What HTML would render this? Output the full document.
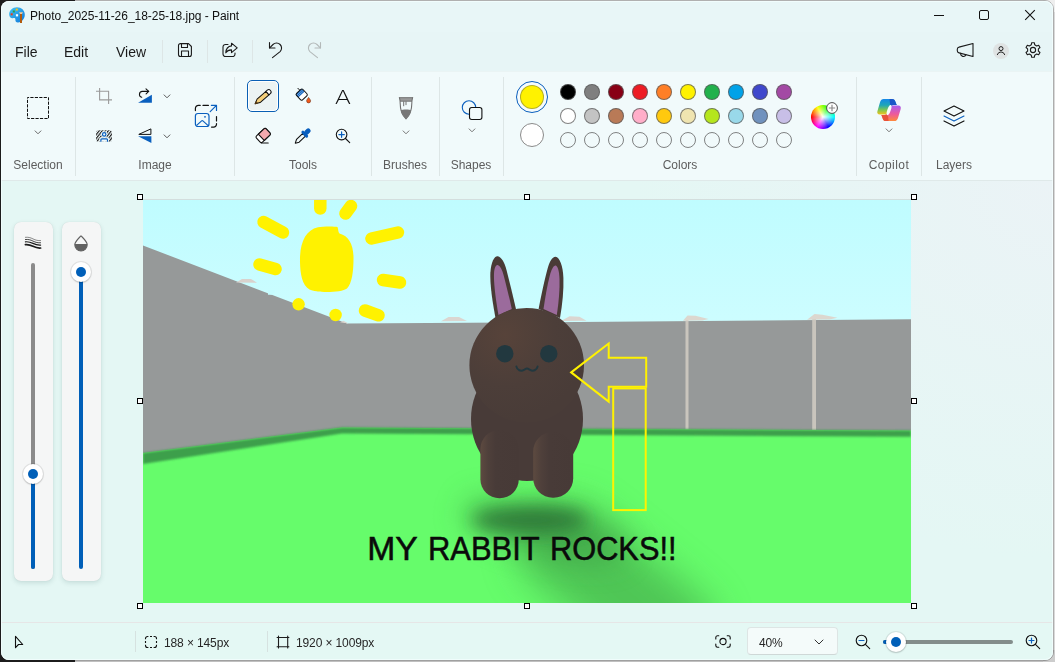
<!DOCTYPE html>
<html lang="en">
<head>
<meta charset="utf-8">
<title>Photo_2025-11-26_18-25-18.jpg - Paint</title>
<style>
*{box-sizing:border-box;margin:0;padding:0}
html,body{width:1055px;height:662px;overflow:hidden}
body{position:relative;font-family:"Liberation Sans",sans-serif;color:#1a1a1a;
  background:linear-gradient(to right,#1c1c1c 0,#1c1c1c 75px,#a9a9a9 75px,#a9a9a9 1053px,#adadad 1053px,#adadad 1054px,#d9d9d9 1054px);}
.abs{position:absolute}
#desk-right{position:absolute;left:1054px;top:0;width:1px;height:662px;background:#d9d9d9}
#win{position:absolute;left:1px;top:1px;width:1052px;height:659px;border-radius:8px;background:#e7f6f7;overflow:hidden}
#titlebar{position:absolute;left:0;top:0;width:1052px;height:31px;background:#e8f6f7}
#menubar{position:absolute;left:0;top:31px;width:1052px;height:39px;background:#e7f5f6}
#ribbon{position:absolute;left:0;top:70px;width:1052px;height:110px;background:#f1fafb;border-bottom:1px solid #dfe9e9;border-top:1px solid #eaf4f4}
#work{position:absolute;left:0;top:180px;width:1052px;height:442px;background:radial-gradient(ellipse 420px 380px at 100% 0%,#ebf3f6 0,rgba(235,243,246,0) 100%),#e4f7f4}
#status{position:absolute;left:0;top:621px;width:1052px;height:38px;background:#e4f8f4;border-top:1px solid #e6e6e6}
.t{position:absolute;white-space:nowrap;line-height:1;filter:grayscale(1)}
.title{left:30px;top:10px;font-size:12px;color:#111;letter-spacing:-.04px}
.menu{font-size:14px;top:45px;color:#1a1a1a}
.lbl{font-size:12px;color:#5d5d5d;top:159px;text-align:center;transform:translateX(-50%)}
.vsep{position:absolute;width:1px;background:#dde6e6}
svg{position:absolute;overflow:visible}
.sw{position:absolute;width:16px;height:16px;border-radius:50%;border:1px solid rgba(90,90,90,.75)}
.panel{position:absolute;top:222px;width:39px;height:359px;border-radius:7px;background:#f5f6f6;box-shadow:0 2px 5px rgba(0,60,60,.13),0 0 1px rgba(0,0,0,.12)}
.hd{position:absolute;width:6px;height:6px;background:#fff;border:1px solid #000}
.st{font-size:12px;color:#262626;top:637px;letter-spacing:-.12px}
</style>
</head>
<body>
<div id="desk-right"></div>
<div class="abs" style="left:75px;top:660px;width:979px;height:1px;background:#a0a0a0"></div><div class="abs" style="left:75px;top:661px;width:979px;height:1px;background:#c0c0c0"></div><div class="abs" style="left:75px;top:0;width:979px;height:1px;background:#b0b0b0"></div>
<div class="abs" style="left:1043px;top:0;width:12px;height:12px;overflow:hidden;background:#eeeeee"><div style="position:absolute;left:-1043px;top:0;width:1054px;height:661px;border-radius:9px;border:1px solid #adadad"></div></div>
<div class="abs" style="left:1043px;top:650px;width:12px;height:12px;overflow:hidden;background:#cdcdcd"><div style="position:absolute;left:-1043px;top:-650px;width:1054px;height:661px;border-radius:9px;border:1px solid #959595"></div></div>
<div id="win">
<div id="titlebar"></div>
<div id="menubar"></div>
<div id="ribbon"></div>
<div id="work"></div>
<div id="status"></div>
<div style="position:absolute;left:0;top:0;width:1052px;height:659px;border-radius:8px;box-shadow:inset 0 0 0 1px rgba(244,255,255,.75)"></div>
</div>
<!-- overlay layer uses page coordinates -->
<div id="ov" class="abs" style="left:0;top:0;width:1055px;height:662px">
<!--TITLE-->
<svg style="left:8px;top:6px" width="18" height="18" viewBox="0 0 18 18">
<defs><linearGradient id="pg" x1="0" y1="0" x2="1" y2="1"><stop offset="0" stop-color="#3fc4f5"/><stop offset="1" stop-color="#1277d8"/></linearGradient></defs>
<path d="M9 1.3C4.4 1.3 1 4.6 1.2 8.6c.1 2.6 2 4.300 4.200 3.500 1.300-.5 2.200.2 2 1.600-.2 1.700.9 3 2.700 2.800C13.800 16.100 16.800 12.700 16.800 8.700 16.800 4.300 13.400 1.300 9 1.300z" fill="url(#pg)"/>
<rect x="2.700" y="7.300" width="2" height="2" fill="#f03a17"/><rect x="4.800" y="4.500" width="2" height="2" fill="#2ea043"/><rect x="7.800" y="2.600" width="2" height="2" fill="#ffc20a"/><rect x="7.900" y="8.200" width="2.200" height="2.200" fill="#fff"/>
<path d="M11 6.200h4l-1 1.800h-2z" fill="#f3c89a"/><rect x="12" y="8" width="2" height="9" fill="#b15a0d"/>
</svg>
<div class="t title">Photo_2025-11-26_18-25-18.jpg - Paint</div>
<svg style="left:934px;top:10px" width="10" height="11" viewBox="0 0 10 11"><path d="M0 5.500h10" stroke="#111" stroke-width="1"/></svg>
<svg style="left:979px;top:10px" width="10" height="10" viewBox="0 0 10 10"><rect x=".5" y=".5" width="9" height="9" rx="1.500" fill="none" stroke="#111" stroke-width="1"/></svg>
<svg style="left:1025px;top:10px" width="10" height="10" viewBox="0 0 10 10"><path d="M.2 .2l9.600 9.600M9.800 .2L.2 9.800" stroke="#111" stroke-width="1.100"/></svg>
<!--MENU-->
<div class="t menu" style="left:15px">File</div>
<div class="t menu" style="left:64px">Edit</div>
<div class="t menu" style="left:116px">View</div>
<div class="vsep" style="left:162px;top:40px;height:23px"></div>
<div class="vsep" style="left:207px;top:40px;height:23px"></div>
<div class="vsep" style="left:252px;top:40px;height:23px"></div>
<svg style="left:178px;top:43px" width="14" height="14" viewBox="0 0 14 14" fill="none" stroke="#1a1a1a" stroke-width="1.100" stroke-linejoin="round"><path d="M2.500 .600h8l2.900 2.900v8a2 2 0 0 1-2 2h-8.900a2 2 0 0 1-2-2v-8.900a2 2 0 0 1 2-2z"/><path d="M3.500 .600v3.900h6v-3.900M3.500 13.400v-5.400h7v5.400"/></svg>
<svg style="left:222px;top:42px" width="16" height="16" viewBox="0 0 16 16" fill="none" stroke="#1a1a1a" stroke-width="1.100" stroke-linejoin="round" stroke-linecap="round"><path d="M6 2.500H3.500a2.500 2.500 0 0 0-2.500 2.500v7a2.500 2.500 0 0 0 2.500 2.500h7a2.500 2.500 0 0 0 2.500-2.500v-1"/><path d="M9.500 1.200l5.700 4.700-5.700 4.700v-2.700c-2.800 0-4.500.9-5.700 2.900.2-3.700 2.200-6.500 5.700-6.900z"/></svg>
<svg style="left:268px;top:41px" width="16" height="17" viewBox="0 0 16 17" fill="none" stroke="#1a1a1a" stroke-width="1.100" stroke-linecap="round" stroke-linejoin="round"><path d="M1.500 1.500v5.500h5.500"/><path d="M1.700 6.800l3.300-3.300a5 5 0 0 1 7.100 7.100l-7.600 6"/></svg>
<svg style="left:306px;top:41px" width="16" height="17" viewBox="0 0 16 17" fill="none" stroke="#b3b9b9" stroke-width="1.100" stroke-linecap="round" stroke-linejoin="round"><path d="M14.500 1.500v5.500h-5.500"/><path d="M14.300 6.800l-3.300-3.300a5 5 0 0 0-7.100 7.100l7.600 6"/></svg>
<svg style="left:956px;top:42px" width="18" height="16" viewBox="0 0 18 16" fill="none" stroke="#1a1a1a" stroke-width="1.100" stroke-linejoin="round" stroke-linecap="round"><path d="M17 1.500v13l-14-3.600a2.200 2.200 0 0 1-1.700-2.100v-1.600a2.200 2.200 0 0 1 1.700-2.100z"/><path d="M4.700 11.400a2.700 2.700 0 0 0 5.200 1.300"/></svg>
<svg style="left:993px;top:43px" width="16" height="16" viewBox="0 0 16 16"><circle cx="8" cy="8" r="8" fill="#dfe3e3"/><circle cx="8" cy="5.600" r="2" fill="none" stroke="#222" stroke-width="1"/><path d="M4.300 11.600a3.900 3.900 0 0 1 7.400 0" fill="none" stroke="#222" stroke-width="1" stroke-linecap="round"/></svg>
<svg style="left:1025px;top:42px" width="16" height="16" viewBox="0 0 16 16" fill="none" stroke="#1a1a1a" stroke-width="1.100" stroke-linejoin="round"><path d="M6.30 2.77 L6.69 0.72 L9.31 0.72 L9.70 2.77 L11.68 3.91 L13.65 3.22 L14.96 5.49 L13.38 6.86 L13.38 9.14 L14.96 10.51 L13.65 12.78 L11.68 12.09 L9.70 13.23 L9.31 15.28 L6.69 15.28 L6.30 13.23 L4.32 12.09 L2.35 12.78 L1.04 10.51 L2.62 9.14 L2.62 6.86 L1.04 5.49 L2.35 3.22 L4.32 3.91Z"/><circle cx="8" cy="8" r="2.600"/></svg>
<!--RIBBON-->
<div class="vsep" style="left:75px;top:77px;height:99px"></div>
<div class="vsep" style="left:234px;top:77px;height:99px"></div>
<div class="vsep" style="left:371px;top:77px;height:99px"></div>
<div class="vsep" style="left:439px;top:77px;height:99px"></div>
<div class="vsep" style="left:503px;top:77px;height:99px"></div>
<div class="vsep" style="left:856px;top:77px;height:99px"></div>
<div class="vsep" style="left:921px;top:77px;height:99px"></div>
<div class="t lbl" style="left:38px">Selection</div>
<div class="t lbl" style="left:155px">Image</div>
<div class="t lbl" style="left:303px">Tools</div>
<div class="t lbl" style="left:405px">Brushes</div>
<div class="t lbl" style="left:471px">Shapes</div>
<div class="t lbl" style="left:680px">Colors</div>
<div class="t lbl" style="left:889px;letter-spacing:.45px">Copilot</div>
<div class="t lbl" style="left:954px">Layers</div>
<svg style="left:27px;top:97px" width="22" height="22" viewBox="0 0 22 22"><rect x=".5" y=".5" width="21" height="21" fill="none" stroke="#111" stroke-width="1" stroke-dasharray="3.200 1.250" stroke-dashoffset="1.600"/></svg>
<svg style="left:34px;top:130px" width="8" height="5" viewBox="0 0 8 5"><path d="M1.100 .9l2.900 2.900 2.900-2.900" fill="none" stroke="#6a6a6a" stroke-width="1" stroke-linecap="round" stroke-linejoin="round"/></svg>
<svg style="left:96px;top:88px" width="16" height="16" viewBox="0 0 16 16" fill="none" stroke="#9b9b9b" stroke-width="1.100"><path d="M3.600 0v11.900h12.400M0 3.300h12.600v12.700"/></svg>
<svg style="left:137px;top:88px" width="16" height="16" viewBox="0 0 16 16"><path d="M1.100 14.800h13.800v-8z" fill="#0a5fbe"/><path d="M11.600 3.400H5.300a3 3 0 0 0-.6 5.900" fill="none" stroke="#111" stroke-width="1.100" stroke-linecap="round"/><path d="M9 .9l2.700 2.500-2.600 2.400" fill="none" stroke="#111" stroke-width="1.100" stroke-linecap="round" stroke-linejoin="round"/></svg>
<svg style="left:163px;top:94px" width="8" height="5" viewBox="0 0 8 5"><path d="M1.100 .9l2.900 2.900 2.900-2.900" fill="none" stroke="#5a5a5a" stroke-width="1" stroke-linecap="round" stroke-linejoin="round"/></svg>
<svg style="left:96px;top:130px" width="16" height="12" viewBox="0 0 16 12"><defs><pattern id="hat" width="2.400" height="2.400" patternUnits="userSpaceOnUse" patternTransform="rotate(-52)"><rect width="2.400" height="1.200" fill="#222"/></pattern><clipPath id="hc"><rect x="0" y=".2" width="16" height="11.600" rx="2.500"/></clipPath></defs><rect x="0" y=".2" width="16" height="11.600" rx="2.500" fill="url(#hat)"/><g clip-path="url(#hc)"><circle cx="8.200" cy="4.400" r="3.100" fill="#f1fafb"/><rect x="3.300" y="7.300" width="9.800" height="6" rx="1.500" fill="#f1fafb"/><circle cx="8.200" cy="4.400" r="1.700" fill="none" stroke="#0a5fbe" stroke-width="1.200"/><path d="M4.900 12v-2.200a1 1 0 0 1 1-1h4.600a1 1 0 0 1 1 1v2.200" fill="none" stroke="#0a5fbe" stroke-width="1.200"/></g></svg>
<svg style="left:137px;top:128px" width="16" height="16" viewBox="0 0 16 16"><path d="M1.800 6.400h12.100v-5.500z" fill="none" stroke="#111" stroke-width="1" stroke-linejoin="round"/><path d="M1.100 8.200h13.300v6.700z" fill="#0a5fbe"/></svg>
<svg style="left:163px;top:134px" width="8" height="5" viewBox="0 0 8 5"><path d="M1.100 .9l2.900 2.900 2.900-2.900" fill="none" stroke="#5a5a5a" stroke-width="1" stroke-linecap="round" stroke-linejoin="round"/></svg>
<svg style="left:194px;top:104px" width="24" height="24" viewBox="0 0 24 24" fill="none" stroke-linecap="round" stroke-linejoin="round"><g stroke="#111" stroke-width="1.200"><path d="M1.400 6.600v-2.200a3 3 0 0 1 3-3h1.800M9 1.400h5.400M22.500 12.500v4.500M22.500 19.500v.8a2.800 2.800 0 0 1-2.800 2.800h-2.200"/></g><g stroke="#0a5fbe" stroke-width="1.200"><rect x="1.400" y="9.500" width="13.600" height="13" rx="2.600"/><path d="M2.900 21.100l4.700-4.200a1 1 0 0 1 1.300 0l4.700 4.200"/><path d="M16.200 7.700l6-6M17.400 1.400h5.100v5.100"/></g><circle cx="11" cy="12.800" r=".9" fill="#0a5fbe"/></svg>
<div class="abs" style="left:247px;top:80px;width:32px;height:32px;border:1px solid #0a5fb4;border-radius:5px;background:#fff"><div style="position:absolute;left:1px;top:1px;right:1px;bottom:1px;border-radius:3.500px;background:#ecf3f3"></div></div>
<svg style="left:247px;top:80px" width="32" height="32" viewBox="0 0 32 32"><g transform="translate(16.100 16.900) rotate(-41)" stroke="#111" stroke-width="1" stroke-linejoin="round"><path d="M-10.600 0l4.600-2.300h11.800v4.600h-11.800z" fill="#f5cf7a"/><path d="M-10.600 0l2.300-1.150v2.300z" fill="#5a3d12" stroke="#5a3d12" stroke-width=".6"/><path d="M5.800-2.300h1.700a2.300 2.300 0 0 1 0 4.600h-1.700z" fill="#fff"/></g></svg>
<svg style="left:294px;top:87px" width="18" height="18" viewBox="0 0 18 18"><path d="M3.900 1.300l3.600 3.600" stroke="#111" stroke-width="1" stroke-linecap="round"/><g transform="translate(7.700 7.600) rotate(-42.600)"><rect x="-4.400" y="-4.400" width="8.800" height="8.800" rx="1.500" fill="#fff"/><path d="M-4.200-4.200h8.400v4h-8.400z" fill="#0a5fbe"/><path d="M-4.400-2.900h8.800M-4.400-1.500h8.800" stroke="#d6e8fa" stroke-width=".45"/><rect x="-4.400" y="-4.400" width="8.800" height="8.800" rx="1.500" fill="none" stroke="#111" stroke-width="1"/></g><path d="M14.600 10.400c1.100 1.500 2 2.400 2 3.500a2 2 0 0 1-4 0c0-1.100.9-2 2-3.500z" fill="#f25a1d" stroke="#5a1c00" stroke-width=".5"/></svg>
<div class="t" style="left:343px;top:87px;transform:translateX(-50%) scaleX(1.2);font-family:'DejaVu Sans',sans-serif;font-weight:200;font-size:20px;color:#111">A</div>
<svg style="left:254px;top:127px" width="18" height="18" viewBox="0 0 18 18"><g transform="translate(9.200 8.500) rotate(-43.500)" stroke="#111" stroke-width="1.100" stroke-linejoin="round"><rect x="-6.700" y="-4.300" width="13.400" height="8.600" rx="1.600" fill="#fff"/><path d="M-2.700-4.300h7.800a1.600 1.600 0 0 1 1.600 1.600v5.400a1.600 1.600 0 0 1-1.600 1.600h-7.800z" fill="#f4a9ae"/></g><path d="M7.300 16h6.900" stroke="#111" stroke-width="1.100" stroke-linecap="round"/></svg>
<svg style="left:294px;top:127px" width="18" height="18" viewBox="0 0 18 18"><g transform="translate(1.300 16.200) rotate(-43.600)"><path d="M0 0l3.500-1.900h8.700v3.800h-8.700z" fill="#f1fafb" stroke="#111" stroke-width="1.100" stroke-linejoin="round"/><rect x="11.600" y="-4.200" width="3" height="8.400" rx="1.500" fill="#0a5fbe"/><rect x="13" y="-2.400" width="7.300" height="4.800" rx="2.400" fill="#0a5fbe"/></g></svg>
<svg style="left:335px;top:128px" width="16" height="16" viewBox="0 0 16 16" fill="none" stroke-linecap="round"><circle cx="6.600" cy="6.600" r="5.300" stroke="#111" stroke-width="1.100"/><path d="M10.500 10.500l4.200 4.200" stroke="#111" stroke-width="1.100"/><path d="M3.900 6.600h5.400M6.600 3.900v5.400" stroke="#0a5fbe" stroke-width="1.200"/></svg>
<svg style="left:398px;top:96px" width="16" height="24" viewBox="0 0 16 24"><path d="M2 1.700h12v3.400h-12z" fill="#9a9a9a"/><path d="M1.300 1.200c.5 2 .9 3.600.9 6.300 0 7 1.700 11.500 5.800 15.300 4.100-3.800 5.800-8.300 5.800-15.300 0-2.700.4-4.300.9-6.300" fill="none" stroke="#707070" stroke-width="1.100" stroke-linejoin="round"/><path d="M2.700 14.200c1.600-.9 8.900-.9 10.500 0-1 3.700-2.700 6.300-5.200 8.500-2.500-2.200-4.200-4.800-5.300-8.500z" fill="#777"/><path d="M1.500 1.700h13M2 5.200h12" stroke="#707070" stroke-width="1"/><path d="M5.700 5.300v4.900M8 5.300v3.800" stroke="#707070" stroke-width="1"/></svg>
<svg style="left:402px;top:130px" width="8" height="5" viewBox="0 0 8 5"><path d="M1.100 .9l2.900 2.900 2.900-2.900" fill="none" stroke="#777" stroke-width="1" stroke-linecap="round" stroke-linejoin="round"/></svg>
<svg style="left:461px;top:100px" width="22" height="21" viewBox="0 0 22 21"><circle cx="8" cy="7.500" r="6.700" fill="none" stroke="#0a5fbe" stroke-width="1.100"/><rect x="8.500" y="7.500" width="12.400" height="12" rx="2.200" fill="#f1fafb" stroke="#111" stroke-width="1.100"/></svg>
<svg style="left:468px;top:128px" width="8" height="5" viewBox="0 0 8 5"><path d="M1.100 .9l2.900 2.900 2.900-2.900" fill="none" stroke="#777" stroke-width="1" stroke-linecap="round" stroke-linejoin="round"/></svg>
<div class="abs" style="left:516px;top:81px;width:32px;height:32px;border-radius:50%;border:1px solid #0a5fbe;background:#f6fbfb"></div><div class="abs" style="left:520px;top:85px;width:24px;height:24px;border-radius:50%;background:#fff200;border:1px solid rgba(120,120,60,.55)"></div>
<div class="abs" style="left:520px;top:123px;width:24px;height:24px;border-radius:50%;background:#fff;border:1px solid #8a8a8a"></div>
<div class="sw" style="left:560px;top:84px;background:#000000"></div><div class="sw" style="left:584px;top:84px;background:#7f7f7f"></div><div class="sw" style="left:608px;top:84px;background:#880015"></div><div class="sw" style="left:632px;top:84px;background:#ed1c24"></div><div class="sw" style="left:656px;top:84px;background:#ff7f27"></div><div class="sw" style="left:680px;top:84px;background:#fff200"></div><div class="sw" style="left:704px;top:84px;background:#22b14c"></div><div class="sw" style="left:728px;top:84px;background:#00a2e8"></div><div class="sw" style="left:752px;top:84px;background:#3f48cc"></div><div class="sw" style="left:776px;top:84px;background:#a349a4"></div>
<div class="sw" style="left:560px;top:108px;background:#ffffff"></div><div class="sw" style="left:584px;top:108px;background:#c3c3c3"></div><div class="sw" style="left:608px;top:108px;background:#b97a57"></div><div class="sw" style="left:632px;top:108px;background:#ffaec9"></div><div class="sw" style="left:656px;top:108px;background:#ffc90e"></div><div class="sw" style="left:680px;top:108px;background:#efe4b0"></div><div class="sw" style="left:704px;top:108px;background:#b5e61d"></div><div class="sw" style="left:728px;top:108px;background:#99d9ea"></div><div class="sw" style="left:752px;top:108px;background:#7092be"></div><div class="sw" style="left:776px;top:108px;background:#c8bfe7"></div>
<div class="sw" style="left:560px;top:132px;background:transparent"></div><div class="sw" style="left:584px;top:132px;background:transparent"></div><div class="sw" style="left:608px;top:132px;background:transparent"></div><div class="sw" style="left:632px;top:132px;background:transparent"></div><div class="sw" style="left:656px;top:132px;background:transparent"></div><div class="sw" style="left:680px;top:132px;background:transparent"></div><div class="sw" style="left:704px;top:132px;background:transparent"></div><div class="sw" style="left:728px;top:132px;background:transparent"></div><div class="sw" style="left:752px;top:132px;background:transparent"></div><div class="sw" style="left:776px;top:132px;background:transparent"></div>
<div class="abs" style="left:811px;top:105px;width:24px;height:24px;border-radius:50%;background:radial-gradient(circle,#fff 0,rgba(255,255,255,.6) 25%,rgba(255,255,255,0) 68%),conic-gradient(from 270deg,#ff0000,#ffff00,#00ff00,#00ffff,#0000ff,#ff00ff,#ff0000)"></div>
<svg style="left:826px;top:102px" width="12" height="12" viewBox="0 0 12 12"><circle cx="6" cy="6" r="5.400" fill="#fff" stroke="#4d4d4d" stroke-width="1"/><path d="M2.800 6h6.400M6 2.800v6.400" stroke="#8a8a8a" stroke-width="1.200"/></svg>
<svg style="left:876px;top:98px" width="26" height="24" viewBox="0 0 26 24"><defs><linearGradient id="c1" x1="0" y1="1" x2="0" y2="16.500" gradientUnits="userSpaceOnUse"><stop offset="0" stop-color="#1488e8"/><stop offset=".4" stop-color="#1fa6b8"/><stop offset=".7" stop-color="#7cc653"/><stop offset="1" stop-color="#f2c21b"/></linearGradient><linearGradient id="c2" x1="0" y1="1" x2="0" y2="16.500" gradientUnits="userSpaceOnUse"><stop offset="0" stop-color="#ff8a3a"/><stop offset=".45" stop-color="#ee5a9b"/><stop offset="1" stop-color="#a95df0"/></linearGradient></defs><path d="M7.600 1h8.400c1.600 0 2.600.700 3.200 2.200l1.500 3.800h-3.200c-1.800 0-2.800 1-3.400 2.800l-1.200 3.700c-.6 1.900-1.700 3-3.700 3h-5.500c-1.900 0-2.900-1.500-2.300-3.300l2.700-9.100c.6-2 1.800-3.100 3.500-3.100z" fill="url(#c1)"/><path d="M13.500 1h2.500c1.600 0 2.600.700 3.200 2.200l1.500 3.800h-3.200c-1.500 0-2.500.700-3.100 2z" fill="#1b55c8"/><g transform="rotate(180 13.050 12.050)"><path d="M7.600 1h8.400c1.600 0 2.600.700 3.200 2.200l1.500 3.800h-3.200c-1.800 0-2.800 1-3.400 2.800l-1.200 3.700c-.6 1.900-1.700 3-3.700 3h-5.500c-1.900 0-2.900-1.500-2.300-3.300l2.700-9.100c.6-2 1.800-3.100 3.500-3.100z" fill="url(#c2)"/><path d="M13.500 1h2.500c1.600 0 2.600.700 3.200 2.200l1.500 3.800h-3.200c-1.500 0-2.500.700-3.100 2z" fill="#e8503a"/></g><ellipse cx="13.050" cy="12.050" rx="1.700" ry="5.400" transform="rotate(19 13.050 12.050)" fill="#f6fcfc"/></svg>
<svg style="left:885px;top:128px" width="8" height="5" viewBox="0 0 8 5"><path d="M1.100 .9l2.900 2.900 2.900-2.900" fill="none" stroke="#777" stroke-width="1" stroke-linecap="round" stroke-linejoin="round"/></svg>
<svg style="left:943px;top:105px" width="22" height="22" viewBox="0 0 22 22" fill="none" stroke-linejoin="round" stroke-linecap="round"><path d="M11 1l10 5-10 5.100-10-5.100z" stroke="#111" stroke-width="1.100"/><path d="M1 11.100l10 5 10-5" stroke="#0a5fbe" stroke-width="1.100"/><path d="M1 15.900l10 5.200 10-5.200" stroke="#111" stroke-width="1.100"/></svg>
<!--WORK-->
<div class="panel" style="left:14px"></div><div class="panel" style="left:62px"></div>
<svg style="left:25px;top:236px" width="17" height="14" viewBox="0 0 17 14" fill="none" stroke="#1a1a1a" stroke-linecap="round"><path d="M.4 1.3c3 -.3 5 .3 7.600 1.600 2.600 1.300 5 1.900 7.600 1.700" stroke-width="0.5"/><path d="M.4 3.5c3 -.3 5 .3 7.600 1.600 2.600 1.300 5 1.900 7.600 1.700" stroke-width="0.8"/><path d="M.4 5.8c3 -.3 5 .3 7.600 1.600 2.600 1.300 5 1.900 7.600 1.700" stroke-width="1.2"/><path d="M.4 8.7c3 -.3 5 .3 7.600 1.600 2.600 1.300 5 1.900 7.600 1.700" stroke-width="1.7"/></svg>
<svg style="left:74px;top:235px" width="14" height="16" viewBox="0 0 14 16"><path d="M7 .8c2.500 2.700 6.200 5.800 6.200 9a6.200 6.200 0 0 1-12.400 0c0-3.200 3.700-6.300 6.200-9z" fill="none" stroke="#616161" stroke-width="1.100" stroke-linejoin="round"/><path d="M.9 8.900h12.200c.1.300.1.600.1.900a6.200 6.200 0 0 1-12.400 0c0-.3 0-.6.100-.9z" fill="#616161"/></svg>
<div class="abs" style="left:31px;top:263px;width:4px;height:306px;border-radius:2px;background:#8b8b8b"></div>
<div class="abs" style="left:31px;top:474px;width:4px;height:95px;border-radius:2px;background:#005fb8"></div>
<div class="abs" style="left:79px;top:270px;width:4px;height:299px;border-radius:2px;background:#005fb8"></div>
<div class="abs" style="left:23px;top:464px;width:20px;height:20px;border-radius:50%;background:#fff;box-shadow:0 0 0 1px rgba(0,0,0,.08),0 1px 2px rgba(0,0,0,.15)"><div style="position:absolute;left:5px;top:5px;width:10px;height:10px;border-radius:50%;background:#005fb8"></div></div>
<div class="abs" style="left:71px;top:262px;width:20px;height:20px;border-radius:50%;background:#fff;box-shadow:0 0 0 1px rgba(0,0,0,.08),0 1px 2px rgba(0,0,0,.15)"><div style="position:absolute;left:5px;top:5px;width:10px;height:10px;border-radius:50%;background:#005fb8"></div></div>
<div class="abs" style="left:143px;top:199px;width:768px;height:1px;background:#d3dedd"></div>
<svg style="left:143px;top:200px" width="768" height="403" viewBox="143 200 768 403">
<defs>
<linearGradient id="sky" x1="0" y1="199" x2="0" y2="325" gradientUnits="userSpaceOnUse"><stop offset="0" stop-color="#bffcff"/><stop offset="1" stop-color="#cdfdff"/></linearGradient>
<radialGradient id="hd" cx="505" cy="335" r="85" gradientUnits="userSpaceOnUse"><stop offset="0" stop-color="#57433a"/><stop offset=".6" stop-color="#4c3e39"/><stop offset="1" stop-color="#493c38"/></radialGradient>
<linearGradient id="leg" x1="0" y1="0" x2="1" y2="0"><stop offset="0" stop-color="#5d4a40"/><stop offset=".2" stop-color="#4f403b"/><stop offset=".4" stop-color="#483b38"/><stop offset="1" stop-color="#473a37"/></linearGradient>
<filter id="b1" filterUnits="userSpaceOnUse" x="300" y="400" width="611" height="300"><feGaussianBlur stdDeviation="9"/></filter>
<filter id="b2" filterUnits="userSpaceOnUse" x="300" y="400" width="611" height="300"><feGaussianBlur stdDeviation="15"/></filter>
<filter id="b4" filterUnits="userSpaceOnUse" x="300" y="400" width="611" height="300"><feGaussianBlur stdDeviation="19"/></filter>
<filter id="b3" x="-5%" y="-50%" width="110%" height="200%"><feGaussianBlur stdDeviation="1.2"/></filter>
<clipPath id="cv"><rect x="143" y="200" width="768" height="403"/></clipPath>
</defs>
<g clip-path="url(#cv)">
<rect x="143" y="199" width="768" height="404" fill="url(#sky)"/>
<!-- wall -->
<path d="M143 245.500L347 323.500L578 322L911 319.200V470H143z" fill="#969999"/>
<path d="M236 282.500l6-3.600h9l6 3.800z" fill="#d9d2cd"/>
<path d="M268 290h6.500v3.200l-3 1.600h-3.500z" fill="#c6fcff"/>
<path d="M340 322.300l3.500-1.500 5 2.700z" fill="#ddd6d0"/>
<!-- posts -->
<rect x="685.500" y="320" width="3" height="110" fill="#c9c5bd"/><rect x="812.200" y="319" width="3.800" height="111" fill="#c9c5bd"/>
<path d="M683 320.800l4.500-5.400 8 .3 13 3.300-6 1.600z" fill="#dcd7cf"/><path d="M807 319.800l7.500-5.800 8 .8 15 3-8 1.700z" fill="#dcd7cf"/>
<path d="M441 321.200l7.500-4.300 10.500.2 8 4z" fill="#dbd6d1"/><path d="M561 321l8.500-4.800 10 .5 7 4z" fill="#dbd6d1"/>
<!-- ground -->
<path d="M143 453L342 427.500L911 430.500V603H143z" fill="#66fc6b"/>
<path d="M143 453L342 427.500L911 430.500V436.800L342 433.500L143 464z" fill="#3c9f4c" filter="url(#b3)"/>
<!-- shadow -->
<path d="M565 548L670 632" stroke="#37903f" stroke-width="92" stroke-linecap="round" opacity=".5" filter="url(#b4)"/>
<ellipse cx="545" cy="530" rx="85" ry="24" transform="rotate(14 545 530)" fill="#37903f" opacity=".5" filter="url(#b2)"/>
<ellipse cx="530" cy="520" rx="58" ry="13" fill="#2a6f35" opacity=".85" filter="url(#b1)"/>
<!-- rabbit ears -->
<path d="M495.500 318C492.500 302 489.800 284 490.400 272.500C491 262 494.500 255.800 497.800 256.300C501.500 257 504.500 262.500 506.500 270C509.500 282 513 296 516.200 310z" fill="#493a36"/>
<path d="M498.500 315C496 301 493.600 284 494 274C494.300 267 496.300 264.300 498.200 265.300C500.500 266.500 502.300 270 503.700 275.500C506.300 286 509.500 298 511.800 309z" fill="#9b6b9c"/>
<path d="M560 318C562.500 304 563.800 290 563.400 278C563.100 266 559.500 257 555.600 256.800C552 256.800 549.500 262 547.500 269C544.500 280 541.500 294 538.600 309z" fill="#493a36"/>
<path d="M556.800 315C558.800 302 559.800 290 559.500 279C559.200 270 557.200 265 555.200 265.600C553 266.300 551.300 270 549.800 275.500C547.300 285 545.300 297 543.500 309z" fill="#9b6b9c"/>
<!-- legs -->
<!-- body + head -->
<ellipse cx="527" cy="419" rx="56" ry="62" fill="#483b38"/>
<rect x="480.400" y="430" width="38.400" height="68.200" rx="19" fill="url(#leg)"/>
<rect x="533.200" y="432" width="40" height="65.800" rx="19.500" fill="url(#leg)"/>
<circle cx="526.700" cy="365.300" r="57.300" fill="url(#hd)"/>
<circle cx="504.800" cy="353.700" r="8.700" fill="#22383f"/><circle cx="548.800" cy="353.700" r="8.700" fill="#22383f"/>
<path d="M516.400 366.600c.7 3.600 4.600 5 7.500 3.300 1.400-.8 2.300-1.400 3.100-1.400.8 0 1.700.6 3.100 1.400 2.900 1.700 6.800.3 7.500-3.300" fill="none" stroke="#22383f" stroke-width="2" stroke-linecap="round"/>
<!-- sun -->
<g fill="none" stroke="#fff200" stroke-linecap="round" stroke-width="12.500">
<path d="M320.300 199V208.500"/><path d="M345.500 213.500L351 206"/><path d="M263.500 222L283 232.500"/><path d="M371.500 238.500L398 232.500"/><path d="M259.500 264.500L275.500 269"/><path d="M383 280L400 282.500"/><path d="M365 310.500L378.500 315.300"/>
</g>
<circle cx="298.600" cy="304.300" r="6.200" fill="#fff200"/><circle cx="335.600" cy="315" r="6.200" fill="#fff200"/>
<path d="M300 262C299.500 244 305 230 318 227.300C322 226.300 334 226 337.500 227C338.500 230 338 232 339.500 233.500C349 236 353.500 245 353.500 258C353.500 272 352 283 347 288.500C341 293 316 293 309.500 289.500C302 285 300.300 274 300 262z" fill="#fff200"/>
<!-- arrow -->
<g fill="none" stroke="#fff200" stroke-width="2">
<path d="M571.200 372.400L608.700 343.500V357.800H646.200V386.800H608.700V401.600z"/>
<rect x="613.200" y="388.400" width="32.500" height="121.700"/>
</g>
<!-- caption -->
<g font-family="'Liberation Sans',sans-serif" font-size="33.800" fill="#0a0a0a" stroke="#0a0a0a" stroke-width=".55">
<text x="367.300" y="560.400" textLength="50.500" lengthAdjust="spacingAndGlyphs">MY</text>
<text x="428" y="560.400" textLength="111.600" lengthAdjust="spacingAndGlyphs">RABBIT</text>
<text x="550" y="560.400" textLength="126.500" lengthAdjust="spacingAndGlyphs">ROCKS!!</text>
</g>
</g>
</svg>
<div class="hd" style="left:137px;top:194px"></div><div class="hd" style="left:524px;top:194px"></div><div class="hd" style="left:911px;top:194px"></div><div class="hd" style="left:137px;top:398px"></div><div class="hd" style="left:911px;top:398px"></div><div class="hd" style="left:137px;top:603px"></div><div class="hd" style="left:524px;top:603px"></div><div class="hd" style="left:911px;top:603px"></div>
<!--STATUS-->
<svg style="left:14px;top:634px" width="10" height="15" viewBox="0 0 10 15"><path d="M1.500 2.300v11.400l3-3.200h4.200z" fill="none" stroke="#111" stroke-width="1.100" stroke-linejoin="round"/></svg>
<div class="vsep" style="left:135px;top:631px;height:21px;background:#d6e2e0"></div><div class="vsep" style="left:267px;top:631px;height:21px;background:#d6e2e0"></div>
<svg style="left:144px;top:635px" width="14" height="14" viewBox="0 0 14 14" fill="none" stroke="#111" stroke-width="1.100" stroke-linecap="butt"><path d="M1.500 4.300v-.8a2 2 0 0 1 2-2h.9M9.600 1.500h.9a2 2 0 0 1 2 2v.8M12.500 9.700v.8a2 2 0 0 1-2 2h-.9M4.400 12.500h-.9a2 2 0 0 1-2-2v-.8M6 1.500h2M12.500 6v2M6 12.500h2M1.500 6v2"/></svg>
<div class="t st" style="left:164px">188 × 145px</div>
<svg style="left:276px;top:635px" width="14" height="14" viewBox="0 0 14 14" fill="none" stroke="#1c1c1c" stroke-width="1.100" stroke-linecap="round"><path d="M1.100 2.500h11.800M1.100 11.700h11.800M2.500 1.100v11.800M11.700 1.100v11.800"/></svg>
<div class="t st" style="left:296px">1920 × 1009px</div>
<svg style="left:715px;top:635px" width="16" height="13" viewBox="0 0 16 13" fill="none" stroke="#111" stroke-width="1.100" stroke-linecap="round"><path d="M.8 4v-1.500a1.700 1.700 0 0 1 1.700-1.700h1.300M12.200 .8h1.300a1.700 1.700 0 0 1 1.700 1.700v1.500M15.200 9v1.500a1.700 1.700 0 0 1-1.700 1.700h-1.300M3.800 12.200h-1.300a1.700 1.700 0 0 1-1.700-1.700v-1.500"/><circle cx="8" cy="6.500" r="3.100"/></svg>
<div class="abs" style="left:747px;top:627px;width:91px;height:28px;border-radius:4px;background:#f4fbfa;border:1px solid #dde5e4;border-bottom-color:#cfd8d7"></div>
<div class="t st" style="left:759px">40%</div>
<svg style="left:814px;top:639px" width="10" height="6" viewBox="0 0 10 6"><path d="M1 1l4 4 4-4" fill="none" stroke="#333" stroke-width="1" stroke-linecap="round" stroke-linejoin="round"/></svg>
<svg style="left:855px;top:634px" width="16" height="16" viewBox="0 0 16 16" fill="none" stroke-linecap="round"><circle cx="6.500" cy="6.500" r="5.300" stroke="#111" stroke-width="1.100"/><path d="M10.400 10.400l4.300 4.300" stroke="#111" stroke-width="1.100"/><path d="M4 6.500h5" stroke="#0a5fbe" stroke-width="1.200"/></svg>
<svg style="left:1025px;top:634px" width="16" height="16" viewBox="0 0 16 16" fill="none" stroke-linecap="round"><circle cx="6.500" cy="6.500" r="5.300" stroke="#111" stroke-width="1.100"/><path d="M10.400 10.400l4.300 4.300" stroke="#111" stroke-width="1.100"/><path d="M4 6.500h5M6.500 4v5" stroke="#0a5fbe" stroke-width="1.200"/></svg>
<div class="abs" style="left:883px;top:640px;width:130px;height:4px;border-radius:2px;background:#838d8b"></div>
<div class="abs" style="left:883px;top:640px;width:14px;height:4px;border-radius:2px;background:#005fb8"></div>
<div class="abs" style="left:886px;top:632px;width:20px;height:20px;border-radius:50%;background:#fff;box-shadow:0 0 0 1px rgba(0,0,0,.08),0 1px 2px rgba(0,0,0,.15)"><div style="position:absolute;left:5px;top:5px;width:10px;height:10px;border-radius:50%;background:#005fb8"></div></div>
</div>
</body>
</html>
